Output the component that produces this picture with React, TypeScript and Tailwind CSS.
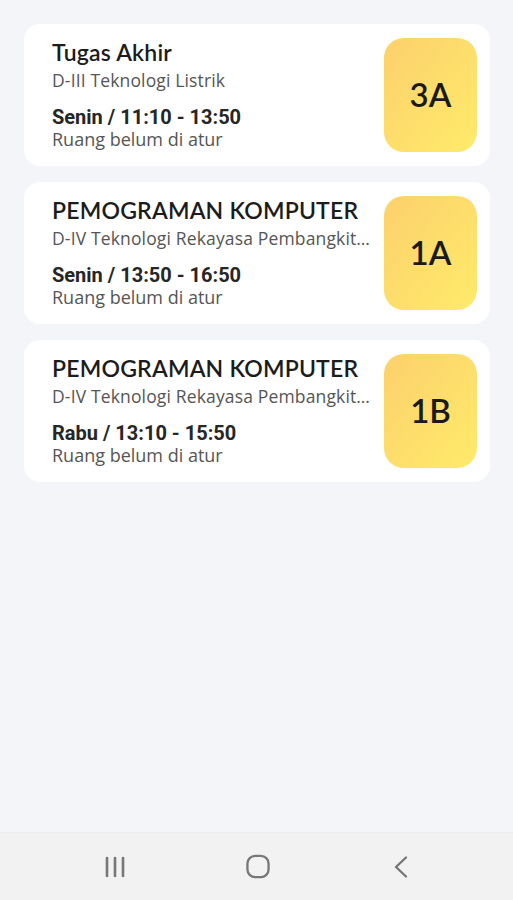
import React from 'react';

type Jadwal = {
  matkul: string;
  prodi: string;
  waktu: string;
  ruang: string;
  kelas: string;
};

const jadwal: Jadwal[] = [
  { matkul: 'Tugas Akhir', prodi: 'D-III Teknologi Listrik', waktu: 'Senin / 11:10 - 13:50', ruang: 'Ruang belum di atur', kelas: '3A' },
  { matkul: 'PEMOGRAMAN KOMPUTER', prodi: 'D-IV Teknologi Rekayasa Pembangkit Energi', waktu: 'Senin / 13:50 - 16:50', ruang: 'Ruang belum di atur', kelas: '1A' },
  { matkul: 'PEMOGRAMAN KOMPUTER', prodi: 'D-IV Teknologi Rekayasa Pembangkit Energi', waktu: 'Rabu / 13:10 - 15:50', ruang: 'Ruang belum di atur', kelas: '1B' },
];

const JadwalCard = ({ item }: { item: Jadwal }) => (
  <div className="flex items-stretch bg-white rounded-[16px] pl-[28px] pr-[13px] py-[14px] h-[142px]">
    <div className="flex-1 min-w-0 flex flex-col pr-[10px]">
      <h2 className="font-['Lato',sans-serif] font-semibold text-[23px] leading-[28px] tracking-[0.2px] text-[#1c1c1c] truncate">
        {item.matkul}
      </h2>
      <p className="mt-[2px] font-['Open_Sans',sans-serif] text-[17.5px] leading-[24px] tracking-[0.15px] text-[#555] truncate">
        {item.prodi}
      </p>
      <p className="mt-[14px] font-['Roboto',sans-serif] font-bold text-[20px] leading-[23px] text-[#262626]">
        {item.waktu}
      </p>
      <p className="font-['Open_Sans',sans-serif] text-[18px] leading-[21px] text-[#555]">
        {item.ruang}
      </p>
    </div>
    <div className="w-[93px] shrink-0 rounded-[20px] bg-gradient-to-br from-[#fcd06c] to-[#feeb6a] flex items-center justify-center">
      <span className="font-['Lato',sans-serif] font-semibold text-[33px] text-[#1a1a1a]">{item.kelas}</span>
    </div>
  </div>
);

export default function App() {
  return (
    <div className="w-[513px] h-[900px] bg-[#f4f5f9] flex flex-col">
      <div className="flex-1 flex flex-col gap-[16px] pl-[24px] pr-[23px] pt-[24px]">
        {jadwal.map((item, i) => (
          <JadwalCard key={i} item={item} />
        ))}
      </div>

      {/* system nav bar */}
      <div className="h-[68px] bg-[#f2f2f2] flex items-center justify-center gap-[119px] pl-[2px] border-t border-[#ececec]">
        <div className="w-[24px] flex justify-center">
          <svg width="22" height="24" viewBox="0 0 22 24" className="text-[#777]">
            <g stroke="currentColor" strokeWidth="2.6" strokeLinecap="round">
              <line x1="3" y1="3" x2="3" y2="21" />
              <line x1="11" y1="3" x2="11" y2="21" />
              <line x1="19" y1="3" x2="19" y2="21" />
            </g>
          </svg>
        </div>
        <div className="w-[24px] flex justify-center">
          <svg width="25" height="25" viewBox="0 0 25 25" className="text-[#777]">
            <rect x="1.5" y="1.5" width="22" height="22" rx="8" fill="none" stroke="currentColor" strokeWidth="2.4" />
          </svg>
        </div>
        <div className="w-[24px] flex justify-center">
          <svg width="16" height="24" viewBox="0 0 16 24" className="text-[#777]">
            <polyline points="13,2.5 3,12 13,21.5" fill="none" stroke="currentColor" strokeWidth="2.4" strokeLinecap="round" strokeLinejoin="round" />
          </svg>
        </div>
      </div>
    </div>
  );
}
